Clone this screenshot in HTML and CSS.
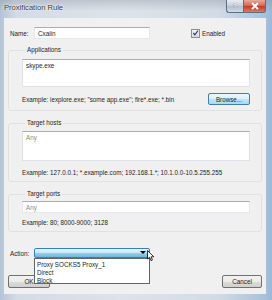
FILE: index.html
```html
<!DOCTYPE html>
<html lang="en">
<head>
  <meta charset="UTF-8" />
  <title>Proxification Rule</title>
  <link rel="stylesheet" href="styles.css">
</head>
<body>
  <div class="window">
    <div class="titlebar">
      <span class="title">Proxification Rule</span>
      <div class="caps">
        <span class="cap help">?</span>
        <span class="cap close">
          <svg viewBox="0 0 10 8" width="10" height="8"><path d="M2 1 L8 7 M8 1 L2 7" stroke="#fff" stroke-width="1.8"/></svg>
        </span>
      </div>
    </div>

    <div class="client">
      <!-- Name + enabled -->
      <div class="row name-row">
        <span class="lbl">Name:</span>
        <div class="field name-field">Cxaiin</div>
        <span class="check">
          <span class="box">
            <svg viewBox="0 0 8 8" width="8" height="8"><path d="M1.5 4 L3.3 6 L6.8 1.2" stroke="#2a3f6a" stroke-width="1.3" fill="none"/></svg>
          </span>
          Enabled
        </span>
      </div>

      <!-- Applications -->
      <fieldset class="group apps">
        <legend>Applications</legend>
        <div class="area">skype.exe</div>
        <div class="hint-row">
          <span class="hint">Example: iexplore.exe; "some app.exe"; fire*.exe; *.bin</span>
          <span class="btn browse">Browse...</span>
        </div>
      </fieldset>

      <!-- Target hosts -->
      <fieldset class="group hosts">
        <legend>Target hosts</legend>
        <div class="area tall grey">Any</div>
        <div class="hint-row">
          <span class="hint">Example: 127.0.0.1; *.example.com; 192.168.1.*; 10.1.0.0-10.5.255.255</span>
        </div>
      </fieldset>

      <!-- Target ports -->
      <fieldset class="group ports">
        <legend>Target ports</legend>
        <div class="field line grey">Any</div>
        <div class="hint-row">
          <span class="hint">Example: 80; 8000-9000; 3128</span>
        </div>
      </fieldset>

      <!-- Action -->
      <div class="row action-row">
        <span class="lbl">Action:</span>
        <div class="combo">
          <span class="arrow"></span>
          <ul class="droplist">
            <li>Proxy SOCKS5 Proxy_1</li>
            <li>Direct</li>
            <li>Block</li>
          </ul>
          <svg class="cursor" viewBox="0 0 8 12" width="8" height="12"><path d="M0.5 0.5 L0.5 9 L2.6 7.2 L4 10.6 L5.4 10 L4.1 6.8 L6.8 6.8 Z" fill="#fff" stroke="#000" stroke-width="0.8"/></svg>
        </div>
      </div>

      <div class="buttons">
        <span class="btn ok">OK</span>
        <span class="btn cancel">Cancel</span>
      </div>
    </div>
  </div>
</body>
</html>
```

FILE: styles.css
```css
body {
  margin: 0;
  font-family: 'Liberation Sans', Arial, sans-serif;
  font-size: 6.3px;
  color: #1e1e1e;
  background: #c9d5e2;
}

.window {
  width: 272px;
  height: 300px;
  display: flex;
  flex-direction: column;
  background: linear-gradient(to right, #b4c4d6 0, #d3dbe4 6%, #dde3ea 45%, #d2dbe5 80%, #a9c2dd 97%, #9ab8da 100%);
}

.titlebar {
  height: 18px;
  display: flex;
  align-items: flex-start;
  justify-content: space-between;
  background: linear-gradient(to bottom, rgba(120, 130, 145, 0.3), rgba(255, 255, 255, 0) 60%);
}

.title {
  margin: 3px 0 0 4px;
  font-size: 7.6px;
  color: #3a3a3a;
  text-shadow: 0 0 3px #fff, 0 0 2px #fff;
}

.caps {
  display: flex;
  margin-right: 6px;
}

.cap {
  height: 13px;
  display: flex;
  align-items: center;
  justify-content: center;
  box-sizing: border-box;
  border: 1px solid #5e6e82;
  border-top: none;
}

.help {
  width: 17px;
  border-right: none;
  border-radius: 0 0 0 3px;
  background: linear-gradient(to bottom, #e7ecf2, #c4cfdb 50%, #b1bfcf 51%, #d0dae6);
  color: #fff;
  font-size: 7px;
  font-weight: bold;
  text-shadow: 0 0 1px #334;
}

.close {
  width: 23px;
  border-radius: 0 0 3px 0;
  background: linear-gradient(to bottom, #e9a99c, #d2634f 50%, #c23b23 51%, #dd7a60);
}

.client {
  flex: 1;
  margin: 0 6px 6px 4px;
  padding: 9px 4px 0 4px;
  background: #f0f0f0;
  position: relative;
}

.row {
  display: flex;
  align-items: center;
}

.lbl {
  width: 26px;
  padding-left: 2px;
  box-sizing: border-box;
}

.field {
  height: 12px;
  box-sizing: border-box;
  background: #fff;
  border: 1px solid #e2e8ee;
  border-top-color: #abadb3;
  padding-left: 3px;
  display: flex;
  align-items: center;
}

.name-field {
  width: 116px;
}

.check {
  margin-left: 41px;
  display: flex;
  align-items: center;
  gap: 2px;
}

.box {
  width: 7px;
  height: 7px;
  border: 1px solid #8e8f8f;
  background: linear-gradient(#f4f4f4, #dadada);
  display: flex;
  align-items: center;
  justify-content: center;
}

.group {
  margin: 0;
  border: 1px solid #dfe1e3;
  border-radius: 3px;
  padding: 0 11px 5px 13px;
}

.group legend {
  padding: 0 2px;
  margin-left: 3px;
  line-height: 8px;
}

.apps {
  margin-top: 7px;
}

.hosts,
.ports {
  margin-top: 8px;
}

.area {
  height: 28px;
  box-sizing: border-box;
  background: #fff;
  border: 1px solid #dde3e9;
  border-top-color: #abadb3;
  padding: 2px 3px;
}

.apps .area {
  margin-top: 5px;
}

.hosts .area {
  margin-top: 4px;
  height: 30px;
}

.ports .field {
  margin-top: 3px;
}

.grey {
  color: #8c8c8c;
}

.hint-row {
  display: flex;
  align-items: center;
  justify-content: space-between;
  height: 12px;
  margin-top: 6px;
}

.hosts .hint-row {
  height: 8px;
  margin-top: 7px;
}

.ports .hint-row {
  height: 8px;
  margin-top: 5px;
}

.btn {
  height: 13px;
  box-sizing: border-box;
  display: flex;
  align-items: center;
  justify-content: center;
  border: 1px solid #707070;
  border-radius: 2px;
  background: linear-gradient(to bottom, #f2f2f2, #ebebeb 50%, #dddddd 51%, #cfcfcf);
}

.browse {
  width: 42px;
  height: 12px;
  border-color: #3c7fb1;
  background: linear-gradient(to bottom, #eaf6fd, #d9f0fc 50%, #bee6fd 51%, #a7d9f5);
}

.action-row {
  margin-top: 16px;
  height: 10px;
}

.combo {
  width: 116px;
  height: 10px;
  box-sizing: border-box;
  border: 1px solid #3c7fb1;
  border-radius: 2px;
  background: linear-gradient(to bottom, #e5f4fc, #c4e5f6 50%, #98d1ef 51%, #6ab7e2);
  position: relative;
}

.arrow {
  position: absolute;
  right: 3px;
  top: 2px;
  border-left: 3px solid transparent;
  border-right: 3px solid transparent;
  border-top: 3px solid #000;
}

.droplist {
  position: absolute;
  top: 9px;
  left: -1px;
  width: 116px;
  height: 26px;
  box-sizing: border-box;
  margin: 0;
  padding: 2px 0 0 0;
  list-style: none;
  background: #fff;
  border: 1px solid #646464;
  z-index: 2;
}

.droplist li {
  line-height: 8px;
  padding-left: 2px;
}

.cursor {
  position: absolute;
  right: -6px;
  top: 1px;
  z-index: 3;
}

.buttons {
  margin-top: 17px;
  display: flex;
  justify-content: space-between;
}

.ok {
  width: 42px;
}

.cancel {
  width: 40px;
}
```
